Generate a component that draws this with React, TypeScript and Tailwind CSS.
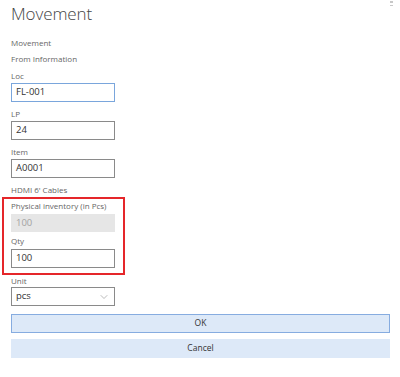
import { ChevronDown } from 'lucide-react'

const font = { fontFamily: '"Open Sans", "Noto Sans", sans-serif' }

function Label({ children, className = '' }: { children: string; className?: string }) {
  return (
    <div className={`whitespace-nowrap text-[8px] leading-[14px] text-[#666] ${className}`}>{children}</div>
  )
}

function Field({ value, focused }: { value: string; focused?: boolean }) {
  return (
    <div
      className={`flex h-[19px] w-[104px] items-center border px-[4px] text-[9.5px] text-[#333] ${
        focused ? 'border-[#7aa6dc]' : 'border-[#8a8a8a]'
      }`}
    >
      {value}
    </div>
  )
}

export default function App() {
  return (
    <div className="relative h-[377px] w-[400px] bg-white px-[11px]" style={font}>
      <div className="absolute right-[7px] top-[1px] flex flex-col gap-[2px]">
        <span className="block h-[2px] w-[3px] bg-[#c8c8c8]" />
        <span className="block h-[1px] w-[3px] bg-[#c8c8c8]" />
      </div>

      <h1 className="pt-[1px] text-[17px] font-light leading-[26px] tracking-[-0.1px] text-[#444]">Movement</h1>

      <Label className="mt-[9px]">Movement</Label>
      <Label className="mt-[2px]">From Information</Label>

      <Label className="mt-[3px]">Loc</Label>
      <Field value="FL-001" focused />

      <Label className="mt-[5px]">LP</Label>
      <Field value="24" />

      <Label className="mt-[5px]">Item</Label>
      <Field value="A0001" />

      <Label className="mt-[5px]">HDMI 6' Cables</Label>

      <div className="-ml-[9px] w-[123px] border-2 border-[#e5262a] pb-[5px] pl-[7px] pr-[8px] pt-0">
        <Label>Physical inventory (in Pcs)</Label>
        <div className="mt-[1px] flex h-[18px] w-[104px] items-center bg-[#e6e6e6] px-[5px] text-[9.5px] text-[#a3a3a3]">
          100
        </div>
        <Label className="mt-[2px]">Qty</Label>
        <div className="mt-[1px]">
          <Field value="100" />
        </div>
      </div>

      <div className="whitespace-nowrap text-[8px] leading-[12px] text-[#666]">Unit</div>
      <div className="flex h-[19px] w-[104px] items-center justify-between border border-[#8a8a8a] pl-[4px] pr-[4px] text-[9.5px] text-[#333]">
        <span>pcs</span>
        <ChevronDown size={12} strokeWidth={1} className="text-[#777]" />
      </div>

      <button className="mt-[8px] flex h-[19px] w-[379px] items-center justify-center border border-[#86ace0] bg-[#dde9f8] text-[8.5px] text-[#333]">
        OK
      </button>
      <button className="mt-[6px] flex h-[19px] w-[379px] items-center justify-center bg-[#dde9f8] text-[8.5px] text-[#333]">
        Cancel
      </button>
    </div>
  )
}
